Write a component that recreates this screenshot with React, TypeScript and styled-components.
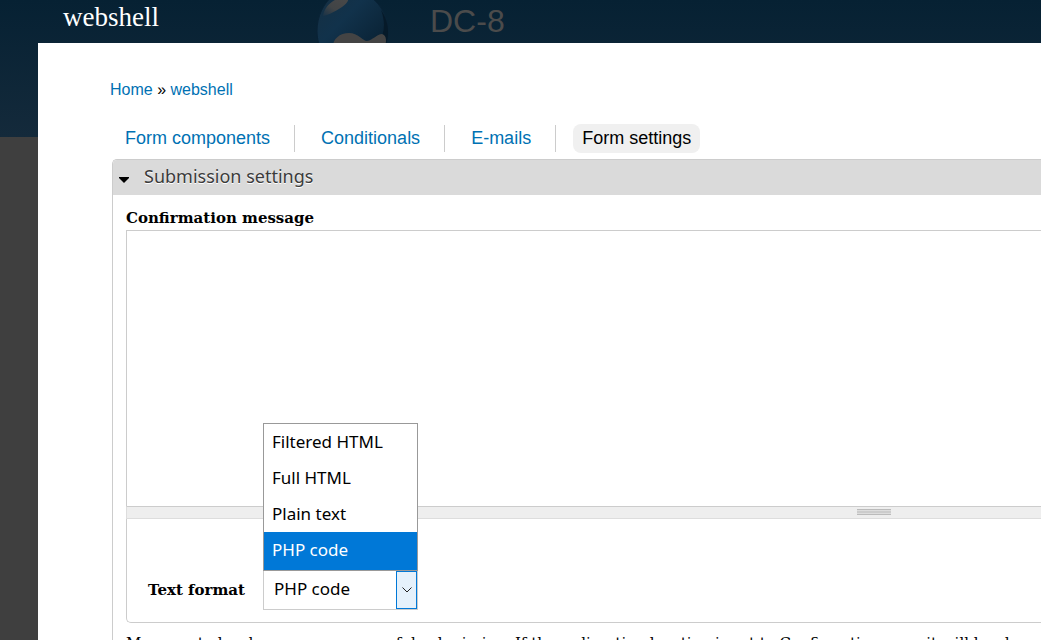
import React from 'react';
import styled, { createGlobalStyle } from 'styled-components';

const sans = '"Liberation Sans", Arial, sans-serif';
const serif = 'Georgia, "DejaVu Serif", serif';
const titleSerif = '"Liberation Serif", "Times New Roman", serif';
const humanist = '"Noto Sans", sans-serif';

const GlobalStyle = createGlobalStyle`
  *, *::before, *::after { box-sizing: border-box; }
  html, body { margin: 0; }
  body { background: #3f3f3f; }
`;

const Page = styled.div`
  position: relative;
  height: 100vh;
  overflow: hidden;
  background: #3f3f3f;
`;

const SiteHeader = styled.header`
  display: flex;
  align-items: flex-start;
  gap: 41px;
  height: 137px;
  padding-left: 316px;
  background: linear-gradient(#062133, #142a3b);
`;

const SiteName = styled.div`
  padding-top: 2px;
  font: 32px/38px ${sans};
  color: #4b4b4b;
`;

const Overlay = styled.div`
  position: absolute;
  inset: 0;
  display: flex;
  flex-direction: column;
  padding-left: 38px;
`;

const OverlayTitle = styled.h1`
  flex: none;
  margin: 0;
  height: 43px;
  padding: 2px 25px 0;
  font: 27px/30px ${titleSerif};
  color: #fff;
`;

const Panel = styled.main`
  flex: 1;
  padding: 37px 0 0 72px;
  background: #fff;
`;

const Breadcrumb = styled.nav`
  font: 16px/20px ${sans};
  color: #000;
`;

const Link = styled.a`
  color: #0071b3;
  text-decoration: none;
`;

const Tabs = styled.nav`
  display: flex;
  align-items: center;
  height: 30px;
  margin-top: 23px;
  padding-left: 6px;
`;

const TabItem = styled.div`
  display: flex;
  align-items: center;
  height: 27px;
  padding: 0 15px 0 0;
  margin-right: 17px;
  border-right: 1px solid #ccc;

  &:last-child { border: 0; }
`;

const Tab = styled.a<{ $active?: boolean }>`
  padding: 0 9px;
  border-radius: 8px;
  font: 18px/29px ${sans};
  text-decoration: none;
  color: ${(p) => (p.$active ? '#000' : '#0071b3')};
  background: ${(p) => (p.$active ? '#f0f0f0' : 'transparent')};
`;

const Fieldset = styled.section`
  margin: 6px 0 0 2px;
  border: 1px solid #ccc;
  border-right: 0;
  border-bottom: 0;
  border-top-left-radius: 5px;
`;

const Legend = styled.button`
  display: flex;
  align-items: center;
  gap: 15px;
  width: 100%;
  height: 35px;
  padding: 0 6px 3px;
  border: 0;
  border-top-left-radius: 4px;
  background: #dadada;
  font: 18px/24px ${humanist};
  color: #3b3b3b;
  text-shadow: 0 1px 0 #fff;
`;

const Caret = styled.svg`
  margin-top: 8px;
`;

const Body = styled.div`
  padding: 13px 0 0 13px;
`;

const Label = styled.label`
  display: block;
  font: bold 15px/20px ${serif};
  color: #000;
`;

const Editor = styled.textarea`
  display: block;
  width: 100%;
  height: 276px;
  margin-top: 2px;
  padding: 4px;
  border: 1px solid #ccc;
  border-width: 1px 0 0 1px;
  border-radius: 0;
  background: #fff;
  resize: none;
  outline: 0;
`;

const Grippie = styled.div`
  display: flex;
  justify-content: flex-end;
  height: 13px;
  padding: 2px 150px 0 0;
  border: 1px solid #ddd;
  border-top-color: #ccc;
  border-right: 0;
  background: #eee;
`;

const Grip = styled.span`
  width: 34px;
  height: 6px;
  border: 1px solid #bbb;
  border-width: 1px 0;
  background: linear-gradient(#ddd 1px, #ccc 1px, #ccc 3px, #ddd 3px);
`;

const FormatRow = styled.div`
  display: flex;
  align-items: flex-end;
  gap: 17px;
  height: 104px;
  padding: 0 21px 12px;
  border: 1px solid #ccc;
  border-width: 0 0 1px 1px;
  border-bottom-left-radius: 5px;
`;

const FormatLabel = styled(Label)`
  width: 98px;
  padding-bottom: 10px;
  white-space: nowrap;
`;

const SelectBox = styled.div`
  position: relative;
  width: 155px;
`;

const Select = styled.select`
  display: block;
  width: 100%;
  height: 40px;
  padding: 0 10px 2px;
  border: 1px solid #ccc;
  border-radius: 0;
  appearance: none;
  outline: 0;
  background: #fff;
  font: 17px/24px ${humanist};
  color: #000;
`;

const Arrow = styled.span`
  position: absolute;
  right: 1px;
  bottom: 1px;
  display: flex;
  align-items: center;
  justify-content: center;
  width: 21px;
  height: 38px;
  border: 1px solid #0078d7;
  background: #e5f1fb;
  pointer-events: none;
`;

const Menu = styled.ul`
  position: absolute;
  left: 0;
  right: 0;
  bottom: 39px;
  margin: 0;
  padding: 0;
  border: 1px solid #999;
  background: #fff;
  list-style: none;
`;

const Option = styled.li<{ $selected: boolean }>`
  padding: 6px 8px;
  font: 17px/24px ${humanist};
  color: ${(p) => (p.$selected ? '#fff' : '#000')};
  background: ${(p) => (p.$selected ? '#0078d7' : '#fff')};
  white-space: nowrap;

  &:last-child { padding-bottom: 8px; }
`;

const Description = styled.p`
  margin: 10px 0 0;
  font: 15px/20px ${serif};
  color: #000;
  white-space: nowrap;
  overflow: hidden;
`;

const formats = ['Filtered HTML', 'Full HTML', 'Plain text', 'PHP code'];
const tabs = ['Form components', 'Conditionals', 'E-mails', 'Form settings'];

const Logo = () => (
  <svg width="73" height="80" viewBox="0 0 73 80" aria-hidden="true">
    <defs>
      <linearGradient id="drop" x1="0" y1="0" x2="1" y2="1">
        <stop offset="0" stopColor="#152f42" />
        <stop offset="0.35" stopColor="#11324b" />
        <stop offset="1" stopColor="#061a29" />
      </linearGradient>
      <linearGradient id="shine" x1="1" y1="0" x2="0" y2="1">
        <stop offset="0" stopColor="#494949" />
        <stop offset="0.6" stopColor="#414446" />
        <stop offset="1" stopColor="#183247" />
      </linearGradient>
    </defs>
    <path d="M18-5C7 3 1 17 1 31c0 22 15 38 35 38s36-15 36-37C72 17 66 6 55-3Z" fill="url(#drop)" stroke="#092235" />
    <path d="M65 10c7 18 1 34-12 43L70 45c4-13 2-25-5-35Z" fill="#061a29" />
    <path d="M7 16C8 7 17-2 29-3c6 0 3 6-3 10-7 5-17 9-19 9Z" fill="url(#shine)" />
    <path d="M17 48c-1-9 7-15 16-15 9 0 14 8 18 8 6-1 10-7 15-7 5 1 5 9 2 14-6 10-50 12-51 0Z" fill="#444" />
  </svg>
);

export default function App() {
  return (
    <>
      <GlobalStyle />
      <Page>
        <SiteHeader>
          <Logo />
          <SiteName>DC-8</SiteName>
        </SiteHeader>
        <Overlay>
          <OverlayTitle>webshell</OverlayTitle>
          <Panel>
            <Breadcrumb aria-label="Breadcrumb">
              <Link href="#home">Home</Link> » <Link href="#webshell">webshell</Link>
            </Breadcrumb>
            <Tabs aria-label="Form sections">
              {tabs.map((tab, i) => (
                <TabItem key={tab}>
                  <Tab href={`#tab-${i}`} $active={i === 3}>{tab}</Tab>
                </TabItem>
              ))}
            </Tabs>
            <Fieldset>
              <Legend type="button" aria-expanded="true">
                <Caret width="10" height="6" viewBox="0 0 10 6" aria-hidden="true">
                  <path d="M0 0h10v1L5 6 0 1Z" />
                </Caret>
                Submission settings
              </Legend>
              <Body>
                <Label htmlFor="message">Confirmation message</Label>
                <Editor id="message" />
                <Grippie><Grip /></Grippie>
                <FormatRow>
                  <FormatLabel htmlFor="format">Text format</FormatLabel>
                  <SelectBox>
                    <Select id="format" defaultValue="PHP code">
                      {formats.map((f) => <option key={f}>{f}</option>)}
                    </Select>
                    <Arrow>
                      <svg width="10" height="6" viewBox="0 0 10 6" fill="none" stroke="#222" aria-hidden="true">
                        <path d="M.5.5 5 5 9.5.5" />
                      </svg>
                    </Arrow>
                    <Menu role="listbox" aria-label="Text format options">
                      {formats.map((f) => (
                        <Option key={f} role="option" aria-selected={f === 'PHP code'} $selected={f === 'PHP code'}>{f}</Option>
                      ))}
                    </Menu>
                  </SelectBox>
                </FormatRow>
                <Description>
                  Message to be shown upon successful submission. If the redirection location is set to Confirmation page it will be shown
                </Description>
              </Body>
            </Fieldset>
          </Panel>
        </Overlay>
      </Page>
    </>
  );
}
